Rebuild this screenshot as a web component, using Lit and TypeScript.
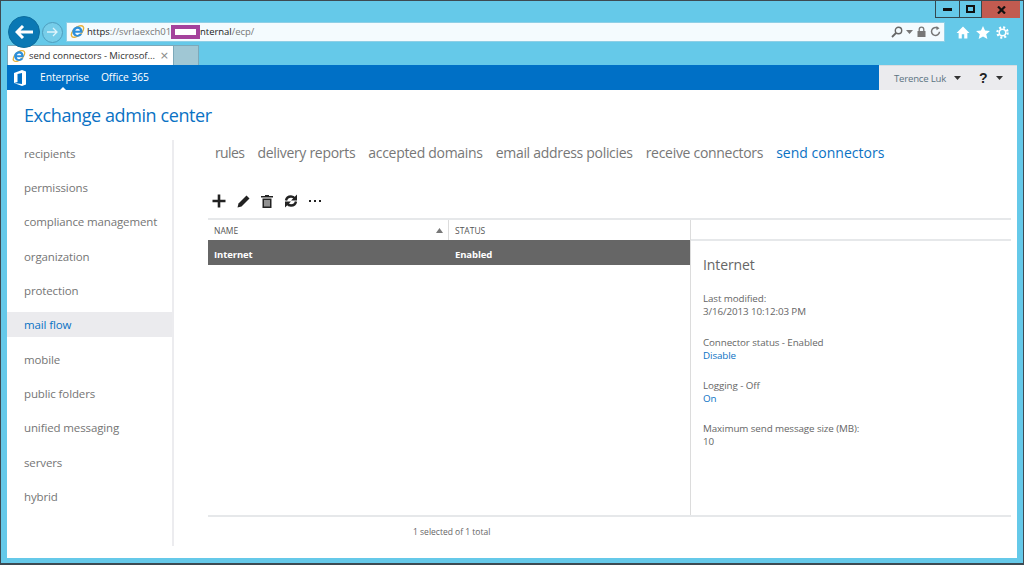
import { LitElement, html, css } from "lit";
import { customElement } from "lit/decorators.js";

const ieLogo = (s: number) => html`<svg width=${s} height=${s} viewBox="0 0 16 16" fill="none">
  <ellipse cx="8" cy="8" rx="8" ry="4.200" transform="rotate(-42 8 8)" stroke="#e6b23c" stroke-width="1.500"/>
  <path d="M8.300 2.600C4.900 2.600 2.500 5.300 2.500 8.300c0 3.100 2.400 5.300 5.500 5.300 2.300 0 4.100-1.100 5-3.100H10c-.5.700-1.200 1.100-2 1.100-1.300 0-2.300-.9-2.400-2.300h7.800C13.700 5.300 11.500 2.600 8.300 2.600zM5.700 7.100C5.900 5.800 7 5 8.200 5s2.300.8 2.400 2.100z" fill="#2c8fdc"/>
</svg>`;

const caret = (c: string) => html`<svg class="caret" width="7" height="4" viewBox="0 0 7 4"><path d="M0 0h7L3.500 4z" fill=${c}/></svg>`;

@customElement("app-root")
export class AppRoot extends LitElement {
  static styles = css`
    :host { display: block; width: 1024px; height: 565px; overflow: hidden; }
    * { box-sizing: border-box; }
    .frame { width: 1024px; height: 565px; background: #65c9e9; border: 1px solid #3d4a52; border-width: 1px 1px 2px 1px; display: flex; flex-direction: column; font-family: "Open Sans", "Noto Sans", sans-serif; color: #666; position: relative; }
    .winbar { height: 16px; display: flex; justify-content: flex-end; padding-right: 3px; flex: none; }
    .wbtn { height: 17px; border: 1px solid #34484f; border-top: none; display: flex; align-items: center; justify-content: center; background: #65c9e9; margin-left: -1px; }
    .wbtn.a { width: 25px; }
    .wbtn.b { width: 23px; }
    .wbtn.c { width: 38px; background: #c25b50; border: none; margin-left: 0; }
    .nav { height: 28px; display: flex; align-items: center; flex: none; padding-left: 7px; position: relative; }
    .back { width: 32px; height: 32px; border-radius: 50%; background: #0a78b4; border: 1px solid #0d6d9e; display: flex; align-items: center; justify-content: center; margin-top: 2px; flex: none; position: relative; z-index: 1; }
    .fwd { width: 21px; height: 21px; border-radius: 50%; border: 1px solid #4e9dbd; background: #76cde9; margin-left: 2px; display: flex; align-items: center; justify-content: center; flex: none; margin-top: 2px; }
    .addr { margin-left: 3px; margin-top: 1px; width: 879px; height: 20px; background: #f4fbfe; border: 1px solid #8ecfe6; display: flex; align-items: center; padding: 0 3px; flex: none; font-size: 9.500px; color: #777; }
    .url { margin-left: 2px; white-space: nowrap; display: flex; align-items: center; letter-spacing: -.04px; }
    .url b { font-weight: 400; color: #222; }
    .mask { display: inline-block; width: 29px; height: 14px; background: #fff; border: 4px solid #a4429c; flex: none; }
    .addr-tools { margin-left: auto; display: flex; align-items: center; gap: 3px; }
    .tools { display: flex; gap: 6px; margin-left: 11px; align-items: center; margin-top: 2px; }
    .tabs { height: 20px; display: flex; padding-left: 6px; flex: none; align-items: flex-end; }
    .tab { width: 167px; height: 20px; background: #fff; border: 1px solid #7ca9ba; border-bottom: none; display: flex; align-items: center; padding: 0 4px; font-size: 9.500px; color: #333; white-space: nowrap; gap: 3px; letter-spacing: -.05px; }
    .tab .x { margin-left: auto; color: #888; font-size: 11px; font-family: "DejaVu Sans", sans-serif; }
    .tabnew { width: 25px; height: 20px; background: #a0c7d4; border: 1px solid #7ca9ba; border-left: none; border-bottom: none; }
    .win { margin: 0 6px 5px 6px; flex: 1; background: #fff; display: flex; flex-direction: column; min-height: 0; }
    .blue { height: 25px; background: #0070c6; display: flex; align-items: center; color: #fff; font-size: 10.300px; flex: none; position: relative; }
    .o365 { margin-left: 6px; width: 14px; height: 16px; margin-right: 13px; }
    .blue a { margin-right: 12px; padding-bottom: 2px; letter-spacing: -.06px; }
    .user { margin-left: auto; width: 138px; height: 25px; background: #ebebee; display: flex; align-items: center; padding-left: 15px; color: #5c7482; font-size: 9.600px; border-top: 1px solid #d8dce0; letter-spacing: -.2px; }
    .user .name { margin-right: 8px; white-space: nowrap; }
    .help { color: #222; font-size: 14px; font-weight: 700; margin-left: 18px; margin-right: 9px; font-family: "Liberation Sans", sans-serif; }
    .notch { position: absolute; left: 53px; bottom: 0; width: 0; height: 0; border: 3px solid transparent; border-bottom-color: #fff; border-top: none; }
    h1 { margin: 0; padding: 13px 0 0 17px; height: 50px; font-weight: 400; font-size: 18px; line-height: 24px; color: #0a72c4; flex: none; white-space: nowrap; letter-spacing: -.41px; }
    .body { flex: 1; display: flex; min-height: 0; }
    .side { width: 167px; height: 406px; border-right: 2px solid #ececef; flex: none; display: flex; flex-direction: column; padding-top: .5px; gap: 9.350px; }
    .side div { height: 25px; display: flex; align-items: center; padding-left: 17px; font-size: 11.500px; color: #757575; flex: none; white-space: nowrap; letter-spacing: -.12px; }
    .side div.on { background: #ebebee; color: #0a72c4; }
    .main { flex: 1; display: flex; flex-direction: column; min-width: 0; }
    .tabs2 { display: flex; height: 25px; margin-left: 41px; gap: 13px; font-size: 14px; color: #777; align-items: center; flex: none; white-space: nowrap; letter-spacing: -.3px; }
    .tabs2 .on { color: #0a72c4; letter-spacing: .02px; }
    .tabs2 span:first-child { letter-spacing: -.6px; }
    .toolbar { height: 24px; margin: 24px 0 0 38px; display: flex; align-items: center; flex: none; gap: 11px; }
    .panel { margin: 5px 6px 0 34px; flex: none; height: 299px; border-top: 2px solid #e6e8ea; border-bottom: 2px solid #e6e8ea; display: flex; }
    .list { width: 482px; flex: none; display: flex; flex-direction: column; }
    .hdr { height: 20px; display: flex; align-items: center; font-size: 8.500px; color: #555; flex: none; }
    .hdr .n { width: 241px; height: 100%; border-right: 1px solid #dcdcdc; padding-left: 6px; display: flex; align-items: center; justify-content: space-between; padding-right: 5px; }
    .hdr .s { padding-left: 6px; }
    .row { height: 25px; background: #666; color: #fff; font-size: 9.500px; font-weight: 700; display: flex; align-items: center; flex: none; letter-spacing: -.1px; padding-top: 4px; }
    .row .n { width: 241px; padding-left: 6px; }
    .row .s { padding-left: 6px; }
    .det { flex: 1; border-left: 1px solid #dcdcdc; display: flex; flex-direction: column; min-width: 0; }
    .dethdr { border-bottom: 2px solid #e6e8ea; flex: none; height: 21px; }
    .detbody { padding: 15px 12px 0 12px; font-size: 9.800px; line-height: 13px; color: #666; letter-spacing: -.1px; }
    .detbody h2 { margin: 0 0 18px; font-size: 14px; font-weight: 400; line-height: 18px; color: #666; }
    .detbody p { margin: 0 0 17px; }
    .detbody p:first-of-type { margin-bottom: 18px; }
    .detbody a { color: #0a72c4; }
    .foot { margin-left: 34px; font-size: 8.500px; color: #666; padding-left: 205px; padding-top: 9px; white-space: nowrap; }
  `;

  render() {
    const nav = ["recipients","permissions","compliance management","organization","protection","mail flow","mobile","public folders","unified messaging","servers","hybrid"];
    const tabs = ["rules","delivery reports","accepted domains","email address policies","receive connectors","send connectors"];
    return html`<div class="frame">
      <div class="winbar">
        <div class="wbtn a"><svg width="9" height="3"><rect width="9" height="3" fill="#111"/></svg></div>
        <div class="wbtn b"><svg width="9" height="8"><rect x="1" y="1" width="7" height="6" fill="none" stroke="#111" stroke-width="2"/></svg></div>
        <div class="wbtn c"><svg width="9" height="8" viewBox="0 0 9 8"><path d="M1 .5l7 7M8 .5l-7 7" stroke="#111" stroke-width="2.200"/></svg></div>
      </div>
      <div class="nav">
        <div class="back"><svg width="18" height="14" viewBox="0 0 18 14" fill="none"><path d="M8 1L2 7l6 6M2 7h16" stroke="#fff" stroke-width="3"/></svg></div>
        <div class="fwd"><svg width="11" height="10" viewBox="0 0 11 10" fill="none"><path d="M6 1l4 4-4 4M10 5H0" stroke="#dff4fb" stroke-width="1.300"/></svg></div>
        <div class="addr">
          ${ieLogo(15)}
          <span class="url"><b>https</b>://svrlaexch01<span class="mask"></span><b>nternal</b>/ecp/</span>
          <span class="addr-tools">
            <svg width="12" height="12" viewBox="0 0 12 12" fill="none"><circle cx="7.500" cy="4.500" r="3.200" stroke="#666" stroke-width="1.400"/><path d="M5 7l-4 4" stroke="#666" stroke-width="1.800"/></svg>
            ${caret("#777")}
            <svg width="11" height="11" viewBox="0 0 11 11"><path d="M1.500 5h8v6h-8z" fill="#777"/><path d="M3.200 5V3.500a2.300 2.300 0 0 1 4.600 0V5" fill="none" stroke="#777" stroke-width="1.300"/></svg>
            <svg width="11" height="11" viewBox="0 0 11 11" fill="none"><path d="M9.500 5.800A4 4 0 1 1 7.500 2" stroke="#777" stroke-width="1.500"/><path d="M6.500 0l3 2.200-3 2z" fill="#777"/></svg>
          </span>
        </div>
        <div class="tools">
          <svg width="14" height="13" viewBox="0 0 15 14"><path d="M7.500 .5L.5 7.500h2.300V13.500h3.400V9h2.600v4.500h3.400V7.500h2.300z" fill="#fff"/></svg>
          <svg width="14" height="13" viewBox="0 0 15 14"><path d="M7.500 0l2.200 4.800 5.300.5-4 3.500 1.200 5.200-4.700-2.800L2.800 14 4 8.800 0 5.300l5.300-.5z" fill="#fff"/></svg>
          <svg width="13" height="13" viewBox="0 0 14 14" fill="none"><circle cx="7" cy="7" r="3.500" stroke="#fff" stroke-width="1.600"/><circle cx="7" cy="7" r="5.500" stroke="#fff" stroke-width="2.400" stroke-dasharray="2.200 2.120"/></svg>
        </div>
      </div>
      <div class="tabs">
        <div class="tab">${ieLogo(14)}<span>send connectors - Microsof...</span><span class="x">×</span></div>
        <div class="tabnew"></div>
      </div>
      <div class="win">
        <div class="blue">
          <svg class="o365" viewBox="0 0 14 16"><path d="M1 3l8-3 4 1.500v13L9 16l-8-3 8 1V3L4.500 4v8L1 13z" fill="#fff"/></svg>
          <a>Enterprise</a><a>Office 365</a>
          <span class="notch"></span>
          <div class="user"><span class="name">Terence Luk</span>${caret("#333")}<span class="help">?</span>${caret("#333")}</div>
        </div>
        <h1>Exchange admin center</h1>
        <div class="body">
          <div class="side">${nav.map(n => html`<div class=${n === "mail flow" ? "on" : ""}>${n}</div>`)}</div>
          <div class="main">
            <div class="tabs2">${tabs.map(t => html`<span class=${t === "send connectors" ? "on" : ""}>${t}</span>`)}</div>
            <div class="toolbar">
              <svg width="14" height="14" viewBox="0 0 14 14"><path d="M5.700 .5h2.600v5.200h5.200v2.600H8.300v5.200H5.700V8.300H.5V5.700h5.200z" fill="#222"/></svg>
              <svg width="13" height="13" viewBox="0 0 13 13"><path d="M9.500 .5l3 3-8 8-4 1 1-4z" fill="#222"/></svg>
              <svg width="12" height="13" viewBox="0 0 12 13"><path d="M4 0h4v1h4v1.500H0V1h4zM1.500 3.500h9V13h-9zM3.500 5v6.500h1V5zm2 0v6.500h1V5zm2 0v6.500h1V5z" fill="#222" fill-rule="evenodd"/></svg>
              <svg width="14" height="14" viewBox="0 0 14 14" fill="none"><path d="M2 6.500C2.500 4 4.500 2.500 7 2.500c1.700 0 3 .8 3.800 2M12 7.500C11.500 10 9.500 11.500 7 11.500c-1.700 0-3-.8-3.800-2" stroke="#222" stroke-width="2.400"/><path d="M13 .5v6H7zM1 13.500v-6h6z" fill="#222"/></svg>
              <svg width="12" height="3" viewBox="0 0 12 3"><path d="M0 0h2v2H0zM5 0h2v2H5zM10 0h2v2h-2z" fill="#222"/></svg>
            </div>
            <div class="panel">
              <div class="list">
                <div class="hdr"><div class="n"><span>NAME</span><svg width="7" height="5" viewBox="0 0 7 5"><path d="M0 5h7L3.500 0z" fill="#777"/></svg></div><div class="s">STATUS</div></div>
                <div class="row"><div class="n">Internet</div><div class="s">Enabled</div></div>
              </div>
              <div class="det">
                <div class="dethdr"></div>
                <div class="detbody">
                  <h2>Internet</h2>
                  <p>Last modified:<br>3/16/2013 10:12:03 PM</p>
                  <p>Connector status - Enabled<br><a>Disable</a></p>
                  <p>Logging - Off<br><a>On</a></p>
                  <p>Maximum send message size (MB):<br>10</p>
                </div>
              </div>
            </div>
            <div class="foot">1 selected of 1 total</div>
          </div>
        </div>
      </div>
    </div>`;
  }
}
